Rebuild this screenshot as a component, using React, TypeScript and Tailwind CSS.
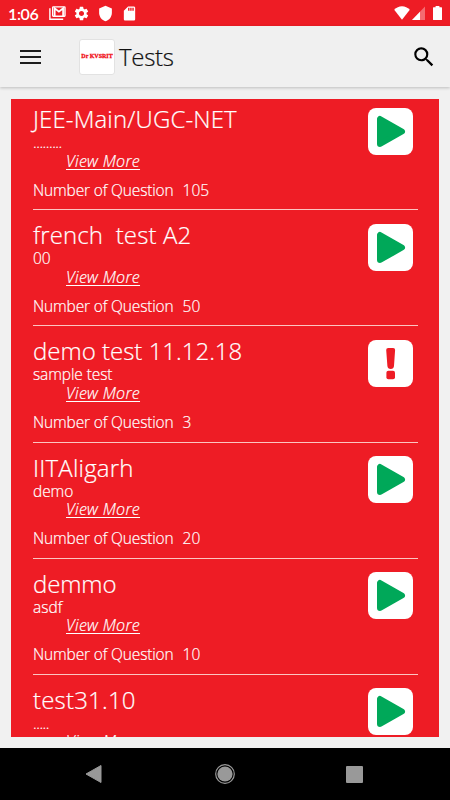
import React from "react";
import { MdSdCard, MdSearch, MdSettings, MdShield } from "react-icons/md";

interface Test {
  title: string;
  titleClass: string;
  info: string;
  infoClass: string;
  questions: string;
  locked?: boolean;
}

const tests: Test[] = [
  { title: "JEE-Main/UGC-NET", titleClass: "tracking-[0.13px]", info: ".........", infoClass: "tracking-[-0.5px]", questions: "105" },
  { title: "french  test A2", titleClass: "tracking-[0.1px]", info: "00", infoClass: "tracking-[-0.2px]", questions: "50" },
  { title: "demo test 11.12.18", titleClass: "tracking-[0px]", info: "sample test", infoClass: "tracking-[-0.1px]", questions: "3", locked: true },
  { title: "IITAligarh", titleClass: "tracking-[0.2px]", info: "demo", infoClass: "tracking-[-0.1px]", questions: "20" },
  { title: "demmo", titleClass: "tracking-[-0.1px]", info: "asdf", infoClass: "tracking-[0px]", questions: "10" },
  { title: "test31.10", titleClass: "tracking-[0.2px]", info: ".....", infoClass: "tracking-[-0.5px]", questions: "10" },
];

const StatusBar: React.FC = () => (
  <div className="flex h-[26px] shrink-0 items-center bg-[#ee1c25] text-white">
    <span className="mt-px ml-[8px] w-[41px] font-['Lato'] text-[16px] leading-none font-semibold tracking-[-0.4px]">1:06</span>
    <svg width="17" height="14" viewBox="0 0 17 14" fill="none" stroke="currentColor">
      <path d="M0.9 2.3V13.2H14.2" strokeWidth="1.4" />
      <rect x="3.7" y="0.9" width="12.3" height="9.3" rx="0.6" strokeWidth="1.4" />
      <path d="M5.7 10V2.3L9.9 5.7L14.1 2.3V10" strokeWidth="1.7" />
    </svg>
    <MdSettings className="ml-[7px] size-[17px]" />
    <MdShield className="ml-[7px] size-[17px]" />
    <MdSdCard className="ml-[7px] size-[17px]" />
    <svg className="ml-auto" width="16" height="14" viewBox="0 0 16 14" fill="currentColor">
      <path d="M8 13.8L0.2 3.7C2.4 1.5 5 0.3 8 0.3s5.6 1.2 7.8 3.4z" />
    </svg>
    <svg className="ml-[2px]" width="13" height="14" viewBox="0 0 13 14" fill="currentColor">
      <path d="M0 14L13 0.5V14z" opacity="0.35" />
      <path d="M0 14L8 5.7V14z" />
    </svg>
    <svg className="mr-[8px] ml-[8px]" width="9" height="14" viewBox="0 0 9 14" fill="currentColor">
      <path d="M2.6 0h3.8v1.2H8.4a.6.6 0 0 1 .6.6V13.4a.6.6 0 0 1-.6.6H.6a.6.6 0 0 1-.6-.6V1.8a.6.6 0 0 1 .6-.6H2.6z" />
    </svg>
  </div>
);

const Header: React.FC = () => (
  <header className="z-10 flex h-[61px] shrink-0 items-center bg-[#f0f0f0] text-[#111] shadow-[0_1px_3px_rgba(0,0,0,0.22)]">
    <button className="ml-[20px] flex w-[21px] flex-col gap-[4px]" aria-label="Menu">
      <span className="h-[2px] bg-[#1c1c1c]" />
      <span className="h-[2px] bg-[#1c1c1c]" />
      <span className="h-[2px] bg-[#1c1c1c]" />
    </button>
    <div className="ml-[38px] flex size-[36px] items-center justify-center rounded-[3px] border border-[#e2e2e2] bg-white font-['Liberation_Serif'] text-[6px] font-black whitespace-nowrap text-[#f01018] [-webkit-text-stroke:0.3px_#f01018]">
      Dr KVSRIT
    </div>
    <h1 className="ml-[4px] font-['Open_Sans'] text-[24px] leading-[32px] font-light tracking-[-0.3px] [-webkit-text-stroke:0.2px_#111]">Tests</h1>
    <MdSearch className="mr-[13px] ml-auto size-[26px] text-black" />
  </header>
);

const StateIcon: React.FC<{ locked?: boolean }> = ({ locked }) => (
  <svg width="45" height="47" viewBox="0 0 45 47">
    <rect width="45" height="47" rx="8" fill="#fff" />
    {locked ? (
      <g fill="#ee1c25">
        <path d="M20.3 8h4.8q2.1 0 2 2L26 26q-.3 3-3.3 3t-3.3-3L18.2 10q-.1-2 2.1-2z" />
        <rect x="18.4" y="30.8" width="8.6" height="8.4" rx="2" />
      </g>
    ) : (
      <path d="M12 11L12 36L34 23.5Z" fill="#00a859" stroke="#00a859" strokeWidth="6" strokeLinejoin="round" />
    )}
  </svg>
);

const TestRow: React.FC<{ test: Test }> = ({ test }) => (
  <li className="flex h-[116.2px] shrink-0 items-start justify-between border-b border-[#fcc5c2] text-white">
    <div className="flex flex-col font-['Open_Sans'] font-light whitespace-pre [-webkit-text-stroke:0.2px_white]">
      <h2 className={`mt-[9px] text-[24px] leading-[32px] ${test.titleClass}`}>{test.title}</h2>
      <p className={`text-[15.5px] leading-[14px] ${test.infoClass}`}>{test.info}</p>
      <a className="mt-[1.5px] ml-[33px] self-start text-[16px] leading-[20px] tracking-[0.3px] italic underline underline-offset-2">View More</a>
      <p className="mt-[9px] text-[15.5px] leading-[20px]">
        <span className="tracking-[-0.15px]">Number of Question</span>
        <span className="ml-[9px]">{test.questions}</span>
      </p>
    </div>
    <button className="mt-[13.5px] mr-[5px]">
      <StateIcon locked={test.locked} />
    </button>
  </li>
);

const NavBar: React.FC = () => (
  <nav className="flex h-[52px] shrink-0 items-center justify-between bg-black px-[85px] text-[#999]">
    <svg width="18" height="20" viewBox="0 0 18 20" fill="currentColor">
      <path d="M1 10L16 1.5V18.5Z" stroke="currentColor" strokeLinejoin="round" />
    </svg>
    <svg width="20" height="20" viewBox="0 0 20 20">
      <circle cx="10" cy="10" r="9.3" fill="none" stroke="currentColor" strokeWidth="1.2" />
      <circle cx="10" cy="10" r="7.6" fill="currentColor" />
    </svg>
    <span className="mr-[2px] size-[17px] rounded-[1px] bg-[#999]" />
  </nav>
);

export default function App() {
  return (
    <div className="flex h-[800px] w-[450px] flex-col overflow-hidden bg-[#f1f1f1]">
      <StatusBar />
      <Header />
      <main className="mx-[11px] mt-[12px] mb-[11.5px] min-h-0 flex-1 overflow-hidden bg-[#ee1c25]">
        <ul className="-mt-[5px] mr-[21px] ml-[22px] flex flex-col">
          {tests.map((test) => (
            <TestRow key={test.title} test={test} />
          ))}
        </ul>
      </main>
      <NavBar />
    </div>
  );
}
